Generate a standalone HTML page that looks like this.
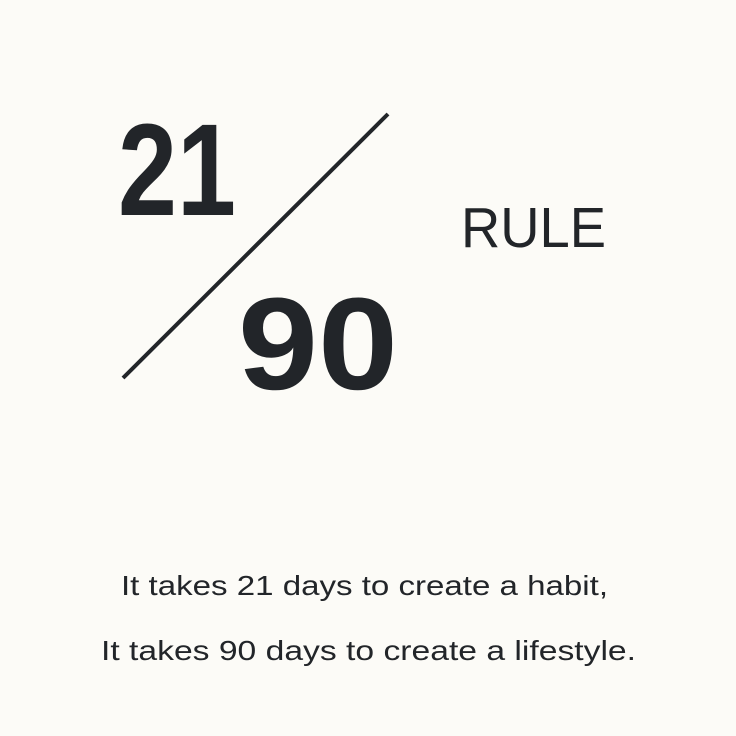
<!DOCTYPE html>
<html><head><meta charset="utf-8"><style>
html,body{margin:0;padding:0;background:#fcfbf7;}
svg{display:block}
</style></head><body>
<svg width="736" height="736" viewBox="0 0 736 736" xmlns="http://www.w3.org/2000/svg">
<rect width="736" height="736" fill="#fcfbf7"/>
<g fill="#222529" font-family="Liberation Sans, DejaVu Sans, sans-serif">
<text x="118" y="215" font-size="131" font-weight="bold" textLength="118" lengthAdjust="spacingAndGlyphs">21</text>
<text x="238" y="389" font-size="131" font-weight="bold" textLength="160" lengthAdjust="spacingAndGlyphs">90</text>
<text x="461" y="247" font-size="57" textLength="145" lengthAdjust="spacingAndGlyphs">RULE</text>
<text x="121" y="595" font-size="28" textLength="487" lengthAdjust="spacingAndGlyphs">It takes 21 days to create a habit,</text>
<text x="101" y="660" font-size="28" textLength="535" lengthAdjust="spacingAndGlyphs">It takes 90 days to create a lifestyle.</text>
</g>
<line x1="388" y1="114" x2="123" y2="378" stroke="#222529" stroke-width="4"/>
</svg>
</body></html>
